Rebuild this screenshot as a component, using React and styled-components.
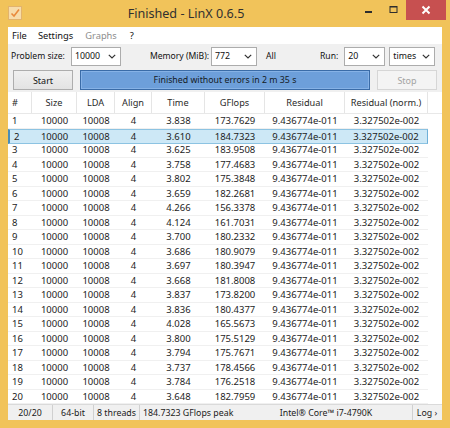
import React from "react";
import styled, { createGlobalStyle } from "styled-components";

const Global = createGlobalStyle`
  html, body { margin: 0; padding: 0; background: #f1c35a; }
  body { font-family: "Noto Sans", sans-serif; }
`;

const UI = `"Noto Sans", "Open Sans", sans-serif`;

const Window = styled.div`
  width: 450px;
  height: 428px;
  background: #f1c35a;
  display: flex;
  flex-direction: column;
  overflow: hidden;
`;

const TitleBar = styled.div`
  height: 27px;
  display: flex;
  align-items: flex-start;
`;

const AppIcon = styled.div`
  width: 14px;
  height: 14px;
  margin: 6px 0 0 8px;
  display: flex;
`;

const Title = styled.div`
  flex: 1;
  text-align: center;
  font-family: ${UI};
  font-size: 12.6px;
  line-height: 27px;
  color: #303030;
  margin-left: -6px;
`;

const Controls = styled.div`
  display: flex;
  align-items: flex-start;
  height: 20px;
  margin-right: 4px;
`;

const CtrlBtn = styled.div`
  width: ${(p) => p.$w}px;
  height: 20px;
  display: flex;
  align-items: center;
  justify-content: center;
  background: ${(p) => (p.$close ? "#c75050" : "transparent")};
`;

const Client = styled.div`
  margin: 0 8px 8px 8px;
  height: 393px;
  background: #f0f0f0;
  display: flex;
  flex-direction: column;
`;

const MenuBar = styled.div`
  height: 17px;
  background: #ffffff;
  display: flex;
  align-items: center;
  padding-left: 4px;
  font-family: ${UI};
  font-size: 9.3px;
`;

const MenuItem = styled.span`
  color: ${(p) => (p.$disabled ? "#8d8d8d" : "#111")};
  margin-right: ${(p) => p.$gap}px;
`;

const ToolRow = styled.div`
  height: 24px;
  display: flex;
  align-items: center;
  font-family: ${UI};
  font-size: 8.6px;
  color: #111;
`;

const Label = styled.span`
  margin-left: ${(p) => p.$ml || 0}px;
  white-space: nowrap;
`;

const Combo = styled.div`
  box-sizing: border-box;
  width: ${(p) => p.$w}px;
  height: 19px;
  margin-left: ${(p) => p.$ml || 0}px;
  background: #ffffff;
  border: 1px solid #acacac;
  display: flex;
  align-items: center;
  justify-content: space-between;
  padding: 0 4px 0 3px;
  font-size: 8.8px;
`;

const Chevron = () => (
  <svg width="8" height="5" viewBox="0 0 8 5">
    <path d="M0.8 0.8 L4 4 L7.2 0.8" fill="none" stroke="#333" strokeWidth="1.2" />
  </svg>
);

const Button = styled.div`
  box-sizing: border-box;
  width: ${(p) => p.$w}px;
  height: 20px;
  margin-left: ${(p) => p.$ml || 0}px;
  border: 1px solid ${(p) => (p.$disabled ? "#d6d6d6" : "#adadad")};
  background: ${(p) => (p.$disabled ? "#f4f4f4" : "linear-gradient(#f0f0f0, #e3e3e3)")};
  color: ${(p) => (p.$disabled ? "#a3a3a3" : "#111")};
  display: flex;
  align-items: center;
  justify-content: center;
  font-size: 9px;
`;

const Progress = styled.div`
  box-sizing: border-box;
  width: ${(p) => p.$w}px;
  height: 20px;
  margin-left: ${(p) => p.$ml}px;
  background: #6d9fda;
  border: 1px solid #3a6ca8;
  box-shadow: inset 0 0 0 1px #86b2e6;
  display: flex;
  align-items: center;
  justify-content: center;
  color: #141a24;
  font-size: 8.8px;
`;

const Table = styled.div`
  height: 312px;
  background: #ffffff;
  display: flex;
  flex-direction: column;
  font-family: ${UI};
`;

const COLS = "24px 45px 38px 37px 53px 60px 80px 83px 14px";

const HeaderRow = styled.div`
  height: 22px;
  display: grid;
  grid-template-columns: ${COLS};
  border-bottom: 1px solid #e8e8e8;
  box-sizing: border-box;
  font-size: 9.2px;
  color: #2a2a2a;
`;

const HeadCell = styled.div`
  display: flex;
  align-items: center;
  justify-content: ${(p) => (p.$left ? "flex-start" : "center")};
  padding-left: ${(p) => (p.$left ? 4 : 0)}px;
  border-right: 1px solid ${(p) => (p.$last ? "transparent" : "#e5e5e5")};
`;

const Row = styled.div`
  box-sizing: border-box;
  height: 14.5px;
  display: grid;
  grid-template-columns: ${COLS};
  font-size: 9.5px;
  color: #1c1c1c;
`;

const Cell = styled.div`
  box-sizing: border-box;
  display: flex;
  align-items: center;
  justify-content: ${(p) => (p.$left ? "flex-start" : "center")};
  padding-left: ${(p) => (p.$left ? 4 : 0)}px;
  border-bottom: 1px solid ${(p) => (p.$blank ? "transparent" : "#f0f0f0")};
  background: ${(p) => (p.$sel && !p.$blank ? "#cde8f6" : "transparent")};
  border-top: ${(p) => (p.$sel && !p.$blank ? "1px solid #8cc3e2" : "none")};
  ${(p) => p.$sel && p.$first && "border-left: 2px solid #4a8db8;"}
  ${(p) => p.$sel && p.$lastData && "border-right: 1px solid #6fb0d8;"}
  ${(p) => p.$sel && !p.$blank && "border-bottom: 1px solid #8cc3e2;"}
`;

const StatusBar = styled.div`
  height: 16px;
  border-top: 1px solid #dadada;
  box-sizing: border-box;
  background: #f0f0f0;
  display: flex;
  align-items: center;
  font-family: ${UI};
  font-size: 8.8px;
  color: #1a1a1a;
`;

const StatusCell = styled.div`
  width: ${(p) => p.$w}px;
  height: 100%;
  display: flex;
  align-items: center;
  justify-content: ${(p) => p.$justify || "center"};
  padding-left: ${(p) => p.$pl || 0}px;
  box-sizing: border-box;
  border-right: 1px solid ${(p) => (p.$sep ? "#d0d0d0" : "transparent")};
`;

const rows = [
  ["3.838", "173.7629"],
  ["3.610", "184.7323"],
  ["3.625", "183.9508"],
  ["3.758", "177.4683"],
  ["3.802", "175.3848"],
  ["3.659", "182.2681"],
  ["4.266", "156.3378"],
  ["4.124", "161.7031"],
  ["3.700", "180.2332"],
  ["3.686", "180.9079"],
  ["3.697", "180.3947"],
  ["3.668", "181.8008"],
  ["3.837", "173.8200"],
  ["3.836", "180.4377"],
  ["4.028", "165.5673"],
  ["3.800", "175.5129"],
  ["3.794", "175.7671"],
  ["3.737", "178.4566"],
  ["3.784", "176.2518"],
  ["3.648", "182.7959"],
];

const headers = ["#", "Size", "LDA", "Align", "Time", "GFlops", "Residual", "Residual (norm.)", ""];

export default function App() {
  return (
    <>
      <Global />
      <Window>
        <TitleBar>
          <AppIcon>
            <svg width="14" height="14" viewBox="0 0 14 14">
              <rect x="0.5" y="0.5" width="13" height="13" fill="#f7dcaa" stroke="#e2b36c" />
              <path d="M3.5 7.5 L6 10 L11 3.5" fill="none" stroke="#e98a3c" strokeWidth="1.6" />
            </svg>
          </AppIcon>
          <Title>Finished - LinX 0.6.5</Title>
          <Controls>
            <CtrlBtn $w={24}>
              <svg width="9" height="20" viewBox="0 0 9 20">
                <rect x="1" y="11" width="7" height="2" fill="#2d2d2d" />
              </svg>
            </CtrlBtn>
            <CtrlBtn $w={26}>
              <svg width="9" height="20" viewBox="0 0 9 20">
                <rect x="1" y="6.5" width="7" height="6" fill="none" stroke="#2d2d2d" />
                <rect x="1" y="6" width="7" height="1.5" fill="#2d2d2d" />
              </svg>
            </CtrlBtn>
            <CtrlBtn $w={40} $close>
              <svg width="10" height="10" viewBox="0 0 10 10">
                <path d="M1.5 1.5 L8.5 8.5 M8.5 1.5 L1.5 8.5" stroke="#fff" strokeWidth="2" />
              </svg>
            </CtrlBtn>
          </Controls>
        </TitleBar>
        <Client>
          <MenuBar>
            <MenuItem $gap={11}>File</MenuItem>
            <MenuItem $gap={12}>Settings</MenuItem>
            <MenuItem $gap={13} $disabled>Graphs</MenuItem>
            <MenuItem>?</MenuItem>
          </MenuBar>
          <ToolRow>
            <Label $ml={3}>Problem size:</Label>
            <Combo $w={50} $ml={6}>10000<Chevron /></Combo>
            <Label $ml={29}>Memory (MiB):</Label>
            <Combo $w={46} $ml={2}>772<Chevron /></Combo>
            <Label $ml={9}>All</Label>
            <Label $ml={44}>Run:</Label>
            <Combo $w={41} $ml={6}>20<Chevron /></Combo>
            <Combo $w={46} $ml={4}>times<Chevron /></Combo>
          </ToolRow>
          <ToolRow>
            <Button $w={60} $ml={5}>Start</Button>
            <Progress $w={290} $ml={7}>Finished without errors in 2 m 35 s</Progress>
            <Button $w={60} $ml={7} $disabled>Stop</Button>
          </ToolRow>
          <Table>
            <HeaderRow>
              {headers.map((h, i) => (
                <HeadCell key={i} $left={i === 0} $last={i === headers.length - 1}>{h}</HeadCell>
              ))}
            </HeaderRow>
            {rows.map(([t, g], i) => {
              const sel = i === 1;
              const vals = [String(i + 1), "10000", "10008", "4", t, g, "9.436774e-011", "3.327502e-002", ""];
              return (
                <Row key={i}>
                  {vals.map((v, j) => (
                    <Cell
                      key={j}
                      $left={j === 0}
                      $sel={sel}
                      $first={j === 0}
                      $lastData={j === 7}
                      $blank={j === 8}
                    >
                      {v}
                    </Cell>
                  ))}
                </Row>
              );
            })}
          </Table>
          <StatusBar>
            <StatusCell $w={45} $sep>20/20</StatusCell>
            <StatusCell $w={41} $sep>64-bit</StatusCell>
            <StatusCell $w={46} $sep>8 threads</StatusCell>
            <StatusCell $w={100} $justify="flex-start" $pl={3}>184.7323 GFlops peak</StatusCell>
            <StatusCell $w={173} $sep>Intel® Core™ i7-4790K</StatusCell>
            <StatusCell $w={29}>Log ›</StatusCell>
          </StatusBar>
        </Client>
      </Window>
    </>
  );
}
